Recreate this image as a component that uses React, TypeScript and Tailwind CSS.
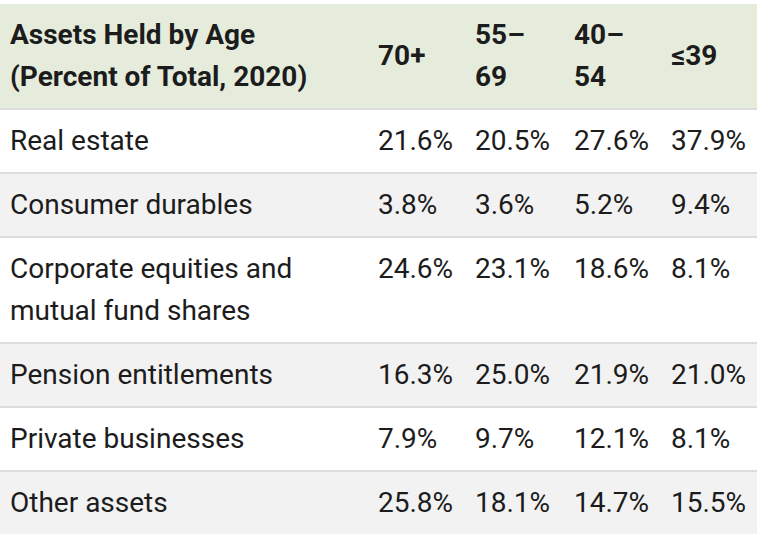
const ROWS: [string, string, string, string, string][] = [
  ['Real estate', '21.6%', '20.5%', '27.6%', '37.9%'],
  ['Consumer durables', '3.8%', '3.6%', '5.2%', '9.4%'],
  ['Corporate equities and mutual fund shares', '24.6%', '23.1%', '18.6%', '8.1%'],
  ['Pension entitlements', '16.3%', '25.0%', '21.9%', '21.0%'],
  ['Private businesses', '7.9%', '9.7%', '12.1%', '8.1%'],
  ['Other assets', '25.8%', '18.1%', '14.7%', '15.5%'],
];

export default function App() {
  return (
    <div className="min-h-screen bg-white pt-[4px] font-['Roboto',sans-serif] text-[28px] leading-[42px] text-[#1c1c1c]">
      <table className="w-[757px] table-fixed border-collapse">
        <colgroup>
          <col className="w-[368px]" />
          <col className="w-[97px]" />
          <col className="w-[99px]" />
          <col className="w-[97px]" />
          <col className="w-[96px]" />
        </colgroup>
        <thead>
          <tr className="bg-[#e6ecdc]">
            <th className="px-[10px] py-[10px] text-left align-middle font-bold">
              Assets Held by Age
              <br />
              (Percent of Total, 2020)
            </th>
            <th className="px-[10px] py-[10px] text-left align-middle font-bold">70+</th>
            <th className="px-[10px] py-[10px] text-left align-middle font-bold">55–69</th>
            <th className="px-[10px] py-[10px] text-left align-middle font-bold">40–54</th>
            <th className="px-[10px] py-[10px] text-left align-middle font-bold">≤39</th>
          </tr>
        </thead>
        <tbody>
          {ROWS.map((row, i) => (
            <tr
              key={row[0]}
              className={`border-t-2 border-[#dcdcdc] ${i % 2 === 1 ? 'bg-[#f2f2f2]' : 'bg-white'}`}
            >
              {row.map((cell, j) => (
                <td key={j} className="px-[10px] py-[10px] align-top">
                  {cell}
                </td>
              ))}
            </tr>
          ))}
        </tbody>
      </table>
    </div>
  );
}
